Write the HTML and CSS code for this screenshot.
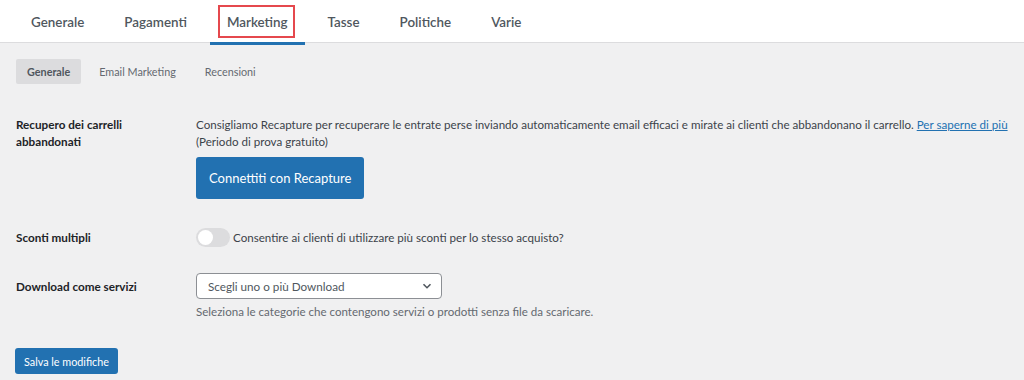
FILE: index.html
```html
<!DOCTYPE html>
<html lang="it">
<head>
<meta charset="utf-8">
<link rel="stylesheet" href="styles.css">
</head>
<body>
<nav class="tabs">
  <a class="tab">Generale</a>
  <a class="tab">Pagamenti</a>
  <a class="tab active"><span class="highlight">Marketing</span></a>
  <a class="tab">Tasse</a>
  <a class="tab">Politiche</a>
  <a class="tab">Varie</a>
</nav>
<main class="content">
  <div class="subtabs">
    <a class="subtab current">Generale</a>
    <a class="subtab">Email Marketing</a>
    <a class="subtab">Recensioni</a>
  </div>
  <div class="form">
    <div class="row row-recapture">
      <div class="label">Recupero dei carrelli abbandonati</div>
      <div class="field">
        <p class="text">Consigliamo Recapture per recuperare le entrate perse inviando automaticamente email efficaci e mirate ai clienti che abbandonano il carrello. <a class="link">Per saperne di più</a><br>(Periodo di prova gratuito)</p>
        <button class="btn-large">Connettiti con Recapture</button>
      </div>
    </div>
    <div class="row row-toggle">
      <div class="label">Sconti multipli</div>
      <div class="field toggle-field">
        <span class="toggle"><span class="knob"></span></span>
        <span class="text">Consentire ai clienti di utilizzare più sconti per lo stesso acquisto?</span>
      </div>
    </div>
    <div class="row row-select">
      <div class="label">Download come servizi</div>
      <div class="field">
        <div class="select">
          <span>Scegli uno o più Download</span>
          <svg class="chev" width="12" height="12" viewBox="0 0 12 12"><path d="M2.5 4.2 L6 7.7 L9.5 4.2" fill="none" stroke="#50575e" stroke-width="1.6"/></svg>
        </div>
        <p class="desc">Seleziona le categorie che contengono servizi o prodotti senza file da scaricare.</p>
      </div>
    </div>
  </div>
  <button class="btn-save">Salva le modifiche</button>
</main>
</body>
</html>
```
FILE: styles.css
```css
* { box-sizing: border-box; }
html, body { margin: 0; padding: 0; }
body {
  background: #f0f0f1;
  font-family: Lato, "Liberation Sans", sans-serif;
  color: #3c434a;
  font-size: 11.7px;
  width: 1024px;
  height: 380px;
  overflow: hidden;
}
.tabs {
  background: #fff;
  height: 43px;
  border-bottom: 1px solid #dcdcde;
  display: flex;
  gap: 6px;
  padding-left: 14px;
}
.tab {
  display: flex;
  align-items: center;
  padding: 0 17px;
  font-size: 13.4px;
  color: #50575e;
  font-weight: 600;
  height: 43px;
  position: relative;
}
.tab.active::after {
  content: "";
  position: absolute;
  left: 0; right: 0; bottom: -2px;
  height: 3px;
  background: #2271b1;
}
.highlight { position: relative; }
.highlight::before {
  content: "";
  position: absolute;
  left: -9px; right: -7px; top: -9px; bottom: -8px;
  border: 2px solid #e5484d;
}
.content { padding: 16px 2px 0 15px; }
.subtabs { display: flex; gap: 7px; margin-left: 1px; }
.subtab {
  font-size: 10.8px;
  color: #646970;
  padding: 0 11px;
  height: 25px;
  display: flex;
  align-items: center;
  border-radius: 2px;
}
.subtab.current { background: #dcdcde; color: #50575e; font-weight: 700; }
.form { margin-top: 32px; }
.row { display: flex; margin-left: 1px; }
.label {
  width: 180px;
  font-weight: 700;
  color: #1d2327;
  font-size: 11.7px;
  line-height: 17px;
  padding-right: 30px;
}
.field { flex: 1; }
.text { margin: 0; font-size: 11.6px; line-height: 17px; color: #3c434a; }
.link { color: #2271b1; text-decoration: underline; white-space: nowrap; }
.btn-large {
  margin-top: 7px;
  background: #2271b1;
  color: #fff;
  border: 0;
  border-radius: 3px;
  height: 42px;
  padding: 0 13px;
  font-family: inherit;
  font-size: 13px;
}
.row-toggle { margin-top: 29px; align-items: center; }
.toggle-field { display: flex; align-items: center; gap: 3px; }
.toggle {
  width: 34px; height: 19px;
  border-radius: 10px;
  background: #dcdcde;
  display: inline-flex;
  align-items: center;
  padding-left: 2px;
}
.knob { width: 15px; height: 15px; border-radius: 50%; background: #fff; }
.row-select { margin-top: 26px; }
.row-select .label { padding-top: 5px; }
.select {
  width: 246px; height: 26px;
  background: #fff;
  border: 1px solid #8c8f94;
  border-radius: 4px;
  display: flex; align-items: center; justify-content: space-between;
  padding: 0 8px 0 11px;
  font-size: 11.7px; color: #50575e;
}
.chev { display: block; }
.desc { margin: 5px 0 0; font-size: 11.55px; line-height: 15px; color: #646970; }
.btn-save {
  margin-top: 29px;
  background: #2271b1;
  color: #fff;
  border: 0;
  border-radius: 3px;
  height: 26px;
  padding: 0 9px;
  font-family: inherit;
  font-size: 10.8px;
}
```
